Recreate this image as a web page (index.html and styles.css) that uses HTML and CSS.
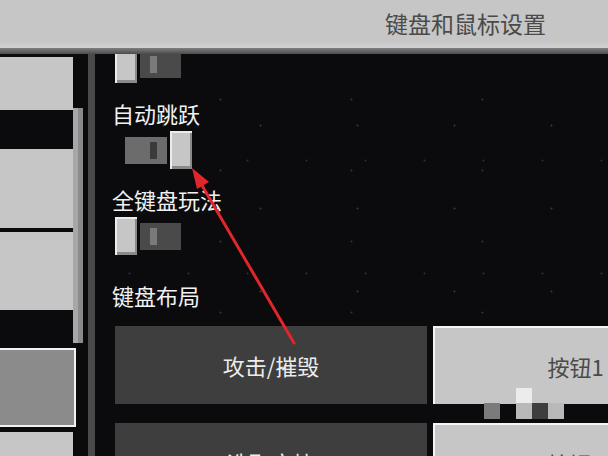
FILE: index.html
```html
<!DOCTYPE html>
<html lang="zh-CN">
<head>
<meta charset="utf-8">
<title>键盘和鼠标设置</title>
<link rel="stylesheet" href="styles.css">
</head>
<body>
<div class="screen">
  <header class="topbar"><h1 class="title">键盘和鼠标设置</h1></header>
  <div class="topbar-edge"></div>
  <div class="main">
    <aside class="sidebar">
      <div class="cats">
        <div class="gap g3"></div>
        <div class="cat h53"></div>
        <div class="gap g39"></div>
        <div class="cat h79"></div>
        <div class="gap g4"></div>
        <div class="cat h78"></div>
        <div class="gap g38"></div>
        <div class="cat selected h79"></div>
        <div class="gap g5"></div>
        <div class="cat h79"></div>
      </div>
      <div class="scrolltrack"><div class="thumb"></div></div>
    </aside>
    <div class="divider"></div>
    <section class="pane">
      <div class="toggle off first"><div class="knob"></div><div class="track"><div class="notch"></div></div></div>
      <div class="label">自动跳跃</div>
      <div class="toggle on"><div class="track"><div class="notch"></div></div><div class="knob"></div></div>
      <div class="label">全键盘玩法</div>
      <div class="toggle off"><div class="knob"></div><div class="track"><div class="notch"></div></div></div>
      <div class="label section">键盘布局</div>
      <div class="keys">
        <div class="key dark">攻击/摧毁</div>
        <div class="key light">按钮1</div>
        <div class="key dark">选取方块</div>
        <div class="key light">按钮2</div>
      </div>
    </section>
  </div>
  <div class="blocks">
    <i></i><i></i><i class="b-white"></i><i></i><i></i>
    <i class="b-mid"></i><i></i><i class="b-light"></i><i class="b-dark"></i><i class="b-light"></i>
  </div>
  <svg class="arrow" width="608" height="456" viewBox="0 0 608 456">
    <line x1="200" y1="182" x2="294" y2="343" stroke="#e1262b" stroke-width="3" stroke-linecap="round"/>
    <polygon points="192,168 197,189 209,182" fill="#e1262b"/>
  </svg>
</div>
</body>
</html>
```
FILE: styles.css
```css
* { box-sizing: border-box; margin: 0; padding: 0; }
html, body { width: 608px; height: 456px; overflow: hidden; background: #0b0b0d; }
body { font-family: "Noto Sans CJK SC", "Noto Sans", sans-serif; }

.screen { position: relative; width: 608px; height: 456px; overflow: hidden; background: #0b0b0d; }

.topbar {
  height: 48px;
  background: linear-gradient(#c6c6c6 85%, #d2d2d2);
  display: flex;
  align-items: center;
  padding-left: 385px;
  padding-bottom: 2px;
}
.title { font-size: 23px; font-weight: 400; color: #4a4a4a; line-height: 1; }
.topbar-edge { height: 6px; background: linear-gradient(#7e7e7e, #4c4c4c); }

.main { display: flex; height: 402px; }

.sidebar { display: flex; width: 88px; flex: none; }
.cats { width: 73px; display: flex; flex-direction: column; }
.cat { background: #c6c6c6; flex: none; }
.cat.selected { background: #8b8b8b; width: 76px; border: 2px solid #f2f2f2; border-left: none; }
.gap { flex: none; }
.g3 { height: 3px; }
.g4 { height: 4px; }
.g5 { height: 5px; }
.g38 { height: 38px; }
.g39 { height: 39px; }
.h53 { height: 53px; }
.h78 { height: 78px; }
.h79 { height: 79px; }

.scrolltrack { width: 10px; padding-top: 54px; flex: none; }
.thumb { height: 235px; background: linear-gradient(to right, #a7a7a7 45%, #8b8b8b 45%); }

.divider { width: 7px; background: #4a4a4a; flex: none; }

.pane {
  flex: 1;
  padding-left: 20px;
  overflow: hidden;
  display: flex;
  flex-direction: column;
  background-color: #0b0b0d;
  background-image:
    radial-gradient(circle, #3a3a3e 0.8px, transparent 1.2px),
    radial-gradient(circle, #333337 0.8px, transparent 1.2px),
    radial-gradient(circle, #2e2e32 0.8px, transparent 1.2px);
  background-size: 97px 83px, 131px 71px, 59px 113px;
  background-position: 20px 30px, 60px 10px, 5px 50px;
}

.toggle { display: flex; align-items: center; gap: 3px; width: 77px; height: 38px; flex: none; margin-top: 3px; }
.toggle.first { margin-top: -9px; }
.knob {
  width: 22px; height: 38px; flex: none;
  background: #c6c6c6;
  box-shadow: inset 2px 2px 0 #ececec, inset -2px -3px 0 #8a8a8a;
}
.track { height: 27px; display: flex; align-items: center; flex: none; }
.toggle.off .track { width: 41px; background: #4a4a4a; padding-left: 10px; }
.toggle.on { padding-left: 10px; }
.toggle.on .track { width: 42px; background: #6c6c6c; padding-left: 25px; }
.notch { width: 7px; height: 17px; }
.toggle.off .notch { background: #7a7a7a; }
.toggle.on .notch { background: #3a3a3a; }

.label { font-size: 22px; line-height: 30px; color: #f2f2f2; margin-left: -3px; margin-top: 15px; flex: none; }
.label.section { margin-top: 25px; }

.keys {
  margin-top: 16px;
  display: grid;
  grid-template-columns: 312px 283px;
  grid-auto-rows: 78px;
  column-gap: 6px;
  row-gap: 19px;
  flex: none;
}
.key { display: flex; align-items: center; justify-content: center; font-size: 22px; line-height: 1; }
.key.dark { background: #3e3e3e; color: #ececec; }
.key.light { background: #c6c6c6; color: #4a4a4a; border-top: 2px solid #f4f4f4; border-left: 2px solid #f4f4f4; }

.blocks {
  position: absolute;
  left: 484px;
  top: 388px;
  display: grid;
  grid-template-columns: repeat(5, 16px);
  grid-template-rows: 15px 16px;
}
.blocks i { display: block; }
.b-white { background: #ececec; }
.b-mid { background: #7b7b7b; }
.b-light { background: #b9b9b9; }
.b-dark { background: #3e3e3e; }

.arrow { position: absolute; left: 0; top: 0; pointer-events: none; }
```
